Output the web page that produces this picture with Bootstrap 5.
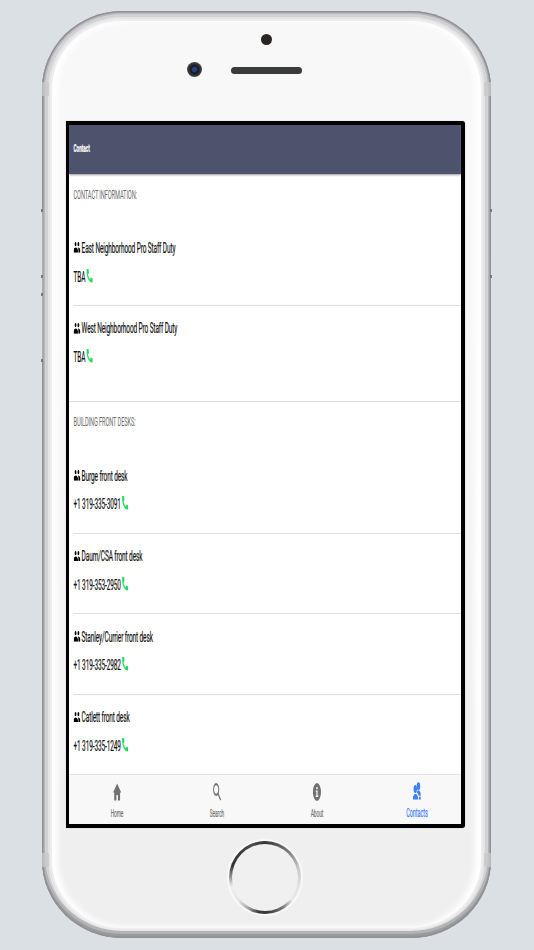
<!DOCTYPE html>
<html lang="en">
<head>
<meta charset="utf-8">
<meta name="viewport" content="width=device-width, initial-scale=1">
<title>Contact</title>
<link href="https://cdn.jsdelivr.net/npm/bootstrap@5.3.0/dist/css/bootstrap.min.css" rel="stylesheet">
<style>
:root{--sx:.45}
body{width:534px;height:950px;background:#dae0e3;font-family:Roboto,sans-serif;overflow:hidden}
.phone{width:448.5px;height:927px;margin:11px 0 0 42px;border-radius:80px/78px;
 background:linear-gradient(#f8f8f8,#f7f7f7 35%,#efefef 85%);
 box-shadow:inset 0 0 0 1.5px #8f9196,inset 0 -3px 1px 1px #999a9c,inset 0 0 0 3px #b7b7bb,inset 0 -4px 0 3px #b4b4b6,inset 0 0 0 6px #d2d2d5,inset 0 0 0 8px #e4e4e6,inset 0 0 1px 10px #ededee,inset 6px 0 6px 10px #fff,inset -6px 0 6px 10px #fff}
.band{width:7px;height:14px;background:#c9c8c8;opacity:.75;top:71px}
.band.low{top:842px}
.at-left{left:0}
.at-right{right:0}
.seam{width:2px;height:3px;background:#75787d}
.seam.at-left{left:-1px}
.seam.at-right{right:-1px}
.s1{top:198px}.s2{top:264px}.s3{top:282px}.s4{top:348px}
.side{width:2px;top:198px;height:152px;background:#a9abb0;border-radius:2px}
.sensor{width:11px;height:11px;left:218.5px;top:23px;background:#2a2424}
.lens{width:15px;height:15px;left:145px;top:51px;background:radial-gradient(circle,#28417d 0 2px,#11182e 3.5px,#282828 5px,#4b4b4e 7.5px)}
.speaker{width:71px;height:7px;left:189px;top:55.5px;background:#3a3c3b}
.homebtn{width:72px;height:73px;left:187px;top:830px;padding:3px;background:conic-gradient(#343437,#77787a 40deg,#c9c9cb 75deg,#e6e6e8 110deg,#e9e9eb 130deg,#777 150deg,#3a3a3d 175deg,#39393b 190deg,#aaa 210deg,#e8e8e8 230deg,#eee 255deg,#9a9a9b 270deg,#333336 290deg,#3d3d40 320deg,#4c4c4f 340deg,#343437);box-shadow:0 0 1px 2px #f9f9f9}
.homebtn>div{background:#f0f0f0}
.bezel{width:399.5px;height:707px;margin:110px 0 0 23.5px;border:solid #000;border-width:4px 4px 4px 3.5px;border-radius:0 3px 3px 0;box-shadow:0 0 1px #888;background:#fff;overflow:hidden}
.app{width:calc(392px/var(--sx));height:699px;transform:scaleX(var(--sx));transform-origin:0 0;color:#111;font-size:14.4px;line-height:20px;letter-spacing:-.22px;-webkit-text-stroke:.2px currentColor}
.topbar{height:49px;background:#4e536d;color:#fff;padding:0 0 2px 10px;font-size:10.5px;font-weight:700;letter-spacing:-.1px;box-shadow:0 1px 3px rgba(0,0,0,.4);z-index:1}
.seclabel{height:41px;margin-bottom:10.3px;padding-left:10px;font-size:12.6px;color:#6c6c6c;-webkit-text-stroke:0}
.entry{height:80.5px;margin-left:10px;border-bottom:1.3px solid #dfdfdf;padding-top:13.5px}
.entry.final{border:0}
.group2{border-top:1.3px solid #dadada;margin-top:14.5px}
.line{height:28.9px}
.ppl{width:15.5px;height:10.8px;margin-right:2.5px;margin-top:3.5px}
.call{width:13.5px;height:13.5px;margin-left:2.5px;margin-top:1px;fill:#25d95c;stroke:#25d95c;stroke-width:.9;overflow:visible}
.tabs{height:50.5px;background:#f8f8f8;border-top:1px solid #e4e4e4;z-index:2}
.tabitem{width:calc(100px/var(--sx));color:#727272;font-size:10.6px;line-height:14px;letter-spacing:-.1px}
.tabitem:first-child{margin-left:calc(-2px/var(--sx))}
.tabitem svg{height:18px;width:18px;margin-top:8.5px;margin-bottom:6px;fill:currentColor}
.tabitem.current{color:#3f80ff;font-size:12.2px}
.tabitem.current svg{margin-top:7px;margin-bottom:6.5px}
</style>
<script src="https://cdn.jsdelivr.net/npm/bootstrap@5.3.0/dist/js/bootstrap.bundle.min.js"></script>
</head>
<body>
<svg class="d-none">
 <symbol id="people" viewBox="1 5 22 14" preserveAspectRatio="none"><path d="M16.500 10.600a2.800 2.800 0 1 0 0-5.600 2.800 2.800 0 0 0 0 5.600zM7.500 10.600a2.800 2.800 0 1 0 0-5.600 2.800 2.800 0 0 0 0 5.600zm.5 1.600c-2.300 0-7 1.200-7 3.800v3h14v-3c0-2.600-4.700-3.800-7-3.800zm8 0c-.3 0-.6 0-1 .05 1.200.85 1.600 2 1.600 3.750v3H23v-3c0-2.600-4.700-3.800-7-3.800z"/></symbol>
 <symbol id="phone" viewBox="3 3 18 18"><path d="M6.620 10.790c1.440 2.830 3.760 5.140 6.590 6.590l2.200-2.200c.27-.27.67-.36 1.020-.24 1.120.37 2.330.57 3.570.57.55 0 1 .45 1 1V20c0 .55-.45 1-1 1-9.390 0-17-7.610-17-17 0-.55.45-1 1-1h3.500c.55 0 1 .45 1 1 0 1.250.2 2.450.57 3.570.11.35.03.74-.25 1.020z"/></symbol>
</svg>
<div class="phone position-relative d-flex flex-column">
 <div class="band at-left position-absolute"></div><div class="band at-right position-absolute"></div>
 <div class="band low at-left position-absolute"></div><div class="band low at-right position-absolute"></div>
 <div class="side at-left position-absolute"></div>
 <div class="seam at-left s1 position-absolute"></div><div class="seam at-left s2 position-absolute"></div>
 <div class="seam at-left s3 position-absolute"></div><div class="seam at-left s4 position-absolute"></div>
 <div class="seam at-right s1 position-absolute"></div><div class="seam at-right s2 position-absolute"></div>
 <div class="sensor position-absolute rounded-circle"></div>
 <div class="lens position-absolute rounded-circle"></div>
 <div class="speaker position-absolute rounded-pill"></div>
 <div class="homebtn position-absolute rounded-circle"><div class="w-100 h-100 rounded-circle"></div></div>
 <div class="bezel">
  <div class="app d-flex flex-column">
   <header class="topbar d-flex align-items-center flex-shrink-0 position-relative">Contact</header>
   <main class="flex-grow-1 overflow-hidden">
    <section>
     <div class="seclabel d-flex align-items-center">CONTACT INFORMATION:</div>
     <div class="entry"><div class="line d-flex"><svg class="ppl"><use href="#people"/></svg>East Neighborhood Pro Staff Duty</div><div class="line d-flex">TBA<svg class="call"><use href="#phone"/></svg></div></div>
     <div class="entry final"><div class="line d-flex"><svg class="ppl"><use href="#people"/></svg>West Neighborhood Pro Staff Duty</div><div class="line d-flex">TBA<svg class="call"><use href="#phone"/></svg></div></div>
    </section>
    <section class="group2">
     <div class="seclabel d-flex align-items-center">BUILDING FRONT DESKS:</div>
     <div class="entry"><div class="line d-flex"><svg class="ppl"><use href="#people"/></svg>Burge front desk</div><div class="line d-flex">+1 319-335-3091<svg class="call"><use href="#phone"/></svg></div></div>
     <div class="entry"><div class="line d-flex"><svg class="ppl"><use href="#people"/></svg>Daum/CSA front desk</div><div class="line d-flex">+1 319-353-2950<svg class="call"><use href="#phone"/></svg></div></div>
     <div class="entry"><div class="line d-flex"><svg class="ppl"><use href="#people"/></svg>Stanley/Currier front desk</div><div class="line d-flex">+1 319-335-2982<svg class="call"><use href="#phone"/></svg></div></div>
     <div class="entry final"><div class="line d-flex"><svg class="ppl"><use href="#people"/></svg>Catlett front desk</div><div class="line d-flex">+1 319-335-1249<svg class="call"><use href="#phone"/></svg></div></div>
    </section>
   </main>
   <nav class="tabs d-flex flex-shrink-0">
    <div class="tabitem d-flex flex-column align-items-center flex-shrink-0"><svg viewBox="0 0 18 18"><path d="M9 .5l9 9h-2.500v8H10.700V12H7.300v5.500H2.500v-8H0z"/></svg>Home</div>
    <div class="tabitem d-flex flex-column align-items-center flex-shrink-0"><svg viewBox="0 0 18 18"><g fill="none" stroke="currentColor" stroke-width="2.200"><ellipse cx="7" cy="6.500" rx="5.800" ry="5.300"/><path d="M11 10.500l6 6.500"/></g></svg>Search</div>
    <div class="tabitem d-flex flex-column align-items-center flex-shrink-0"><svg viewBox="0 0 18 18"><path fill-rule="evenodd" d="M9 0a9 9 0 1 0 0 18A9 9 0 0 0 9 0zM7.500 4h3v2.300h-3zM6.500 7.500h4v5H12V14H6.300v-1.500h1.400V9H6.500z"/></svg>About</div>
    <div class="tabitem current d-flex flex-column align-items-center flex-shrink-0"><svg viewBox="0 0 18 18"><ellipse cx="12.500" cy="4.200" rx="3.900" ry="4"/><ellipse cx="5.500" cy="7" rx="3.800" ry="4"/><path d="M0 17.500c0-4 3-4.500 4.500-5.500h3c2 1 4.500 1.500 4.500 5.500zM9.300 9.500l2-1h3.300c1.500 1.500 3.400 1.700 3.400 5.200h-5c-.8-1.600-2-2.400-3.700-3zM13.500 14.800H18v2.700h-4.200z"/></svg>Contacts</div>
   </nav>
  </div>
 </div>
</div>
</body>
</html>
